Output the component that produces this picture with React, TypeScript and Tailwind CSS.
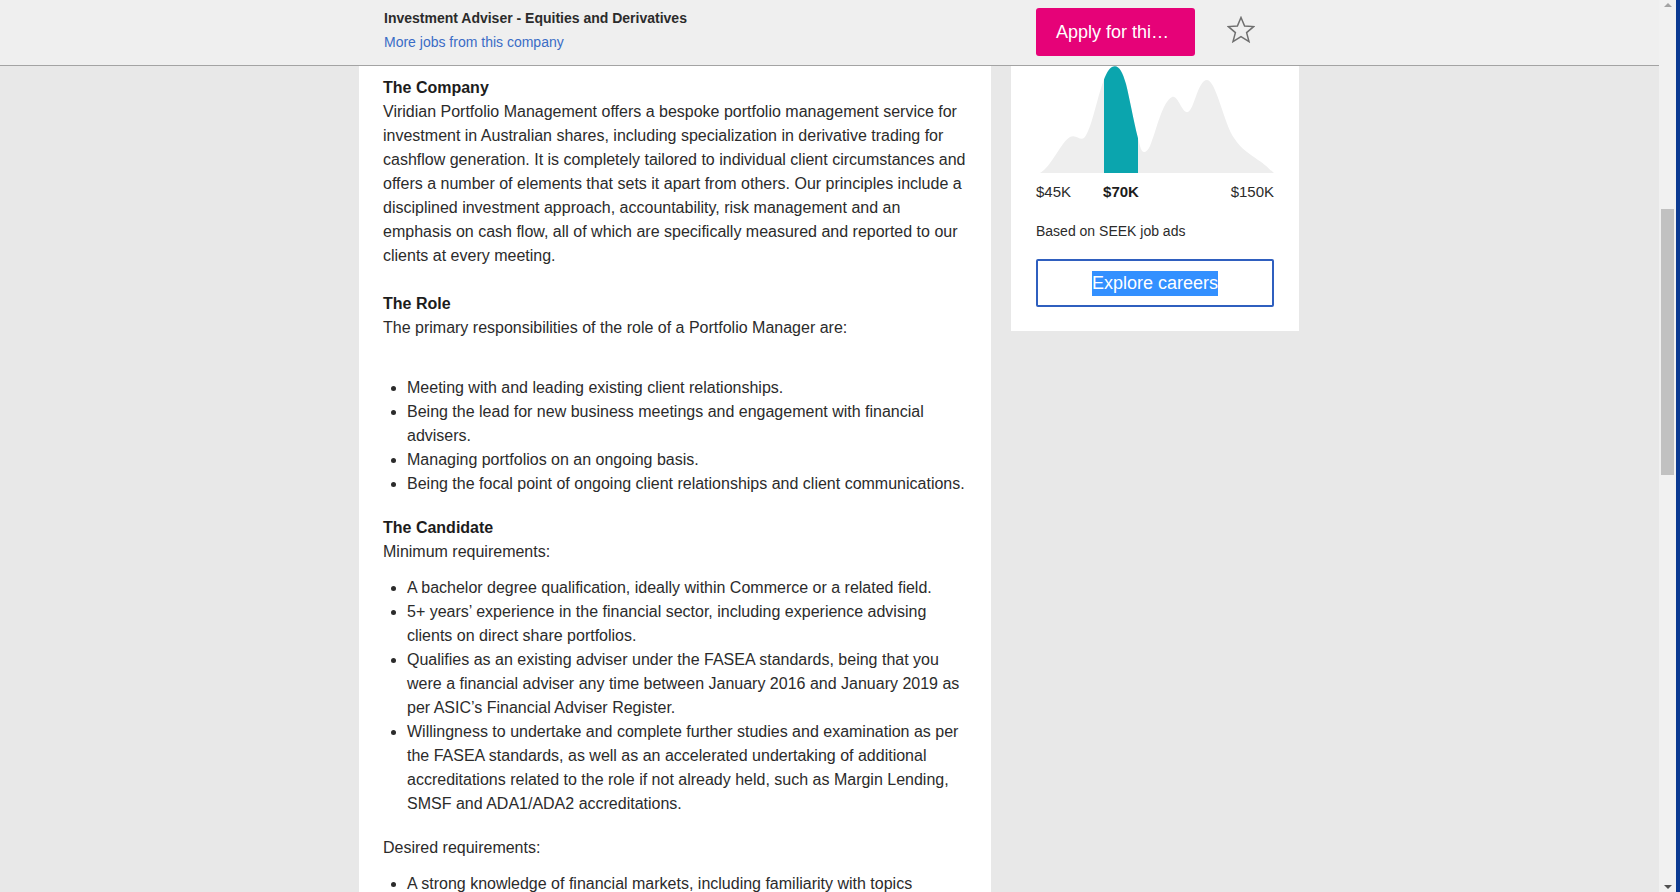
import React from 'react';

const curve =
  'M4 107 C16 100 25 76 34 71 C40 68 44 75 48 72 C58 62 64 8 76 1 C82 -2 86 4 90 18 C94 34 98 58 104 80 C106 88 110 88 114 80 C120 66 126 36 136 31 C142 28 146 48 152 46 C158 44 162 14 171 14 C180 14 188 58 198 72 C206 84 214 88 222 94 C230 99 234 104 238 107 Z';

function SalaryChart() {
  return (
    <svg width="238" height="107" viewBox="0 0 238 107" className="block">
      <defs>
        <clipPath id="band">
          <rect x="68" y="0" width="34" height="107" />
        </clipPath>
      </defs>
      <path d={curve} fill="#eeeeee" />
      <path d={curve} fill="#0ba5ae" clipPath="url(#band)" />
    </svg>
  );
}

function StarIcon() {
  return (
    <svg width="28" height="27" viewBox="0 0 28 27">
      <polygon
        points="14,1.5 17.6,10 26.6,10.6 19.6,16.6 22,25.6 14,20.6 6,25.6 8.4,16.6 1.4,10.6 10.4,10"
        fill="none"
        stroke="#6f6f6f"
        strokeWidth="1.5"
        strokeLinejoin="miter"
      />
    </svg>
  );
}

export default function App() {
  return (
    <div className="flex h-[892px] w-[1680px] overflow-hidden font-['Liberation_Sans',Arial,sans-serif] bg-[#e8e8e8]">
      <div className="flex w-[1659px] flex-col">
        {/* Sticky header */}
        <header className="h-[66px] shrink-0 border-b border-[#a3a3a3] bg-[#efefef]">
          <div className="ml-[359px] flex w-[940px]">
            <div className="w-[652px] pl-[25px] pt-2">
              <p className="text-[14px] leading-5 font-bold text-[#2b2b2b]">
                Investment Adviser - Equities and Derivatives
              </p>
              <a className="mt-1 block text-[14px] leading-5 text-[#3a6cc6]">More jobs from this company</a>
            </div>
            <div className="flex items-start pl-[25px]">
              <button className="mt-2 h-12 w-[159px] rounded-[3px] bg-[#e60278] pl-5 text-left text-[18px] text-white">
                Apply for thi…
              </button>
              <div className="ml-8 mt-4">
                <StarIcon />
              </div>
            </div>
          </div>
        </header>

        {/* Body */}
        <div className="flex-1 overflow-hidden">
          <div className="ml-[359px] flex h-full w-[940px] items-start gap-5">
            <article className="w-[632px] self-stretch bg-white px-6 pt-[10px] text-[16px] leading-6 text-[#2b2b2b]">
              <p className="mb-6">
                <strong className="text-[#1c1c1c]">The Company</strong>
                <br />
                Viridian Portfolio Management offers a bespoke portfolio management service for investment in
                Australian shares, including specialization in derivative trading for cashflow generation. It is
                completely tailored to individual client circumstances and offers a number of elements that sets it
                apart from others. Our principles include a disciplined investment approach, accountability, risk
                management and an emphasis on cash flow, all of which are specifically measured and reported to our
                clients at every meeting.
              </p>
              <p className="mb-9">
                <strong className="text-[#1c1c1c]">The Role</strong>
                <br />
                The primary responsibilities of the role of a Portfolio Manager are:
              </p>
              <ul className="mb-5 list-disc pl-6">
                <li>Meeting with and leading existing client relationships.</li>
                <li>Being the lead for new business meetings and engagement with financial advisers.</li>
                <li>Managing portfolios on an ongoing basis.</li>
                <li>Being the focal point of ongoing client relationships and client communications.</li>
              </ul>
              <p className="mb-3">
                <strong className="text-[#1c1c1c]">The Candidate</strong>
                <br />
                Minimum requirements:
              </p>
              <ul className="mb-5 list-disc pl-6">
                <li>A bachelor degree qualification, ideally within Commerce or a related field.</li>
                <li>5+ years’ experience in the financial sector, including experience advising clients on direct share portfolios.</li>
                <li>
                  Qualifies as an existing adviser under the FASEA standards, being that you were a financial adviser any
                  time between January 2016 and January 2019 as per ASIC’s Financial Adviser Register.
                </li>
                <li>
                  Willingness to undertake and complete further studies and examination as per the FASEA standards, as
                  well as an accelerated undertaking of additional accreditations related to the role if not already
                  held, such as Margin Lending, SMSF and ADA1/ADA2 accreditations.
                </li>
              </ul>
              <p className="mb-3">Desired requirements:</p>
              <ul className="list-disc pl-6">
                <li>A strong knowledge of financial markets, including familiarity with topics</li>
              </ul>
            </article>

            <aside className="w-[288px] bg-white px-[25px] pb-6">
              <SalaryChart />
              <div className="mt-[10px] flex text-[15px] leading-[18px] text-[#2b2b2b]">
                <span>$45K</span>
                <span className="ml-8 font-bold text-[#1c1c1c]">$70K</span>
                <span className="ml-auto">$150K</span>
              </div>
              <p className="mt-5 text-[14px] leading-5 text-[#2b2b2b]">Based on SEEK job ads</p>
              <button className="mt-[18px] flex h-12 w-full items-center justify-center rounded-[2px] border-2 border-[#2f5fbf] bg-white">
                <span className="bg-[#3390ff] text-[18px] leading-[25px] text-white">Explore careers</span>
              </button>
            </aside>
          </div>
        </div>
      </div>

      {/* Scrollbar */}
      <div className="relative w-[17px] bg-[#f1f1f1]">
        <div className="absolute left-1/2 top-[3px] h-0 w-0 -translate-x-1/2 border-x-4 border-b-4 border-x-transparent border-b-[#a3a3a3]" />
        <div className="absolute left-[2px] top-[209px] h-[266px] w-[13px] bg-[#c1c1c1]" />
        <div className="absolute bottom-[3px] left-1/2 h-0 w-0 -translate-x-1/2 border-x-4 border-t-4 border-x-transparent border-t-[#505050]" />
      </div>
      <div className="w-[4px] bg-[#0b3a92]" />
    </div>
  );
}
